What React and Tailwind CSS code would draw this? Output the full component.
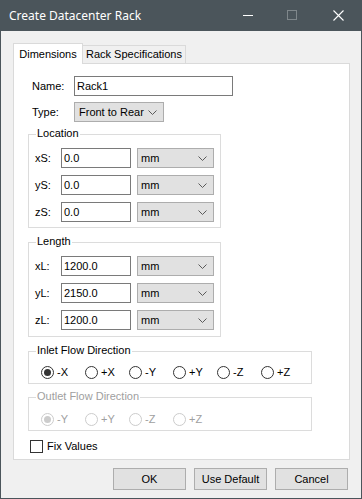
import React from "react";

const F = { fontFamily: '"Liberation Sans", Arial, sans-serif' };

function Chevron({ color = "#5a5a5a" }) {
  return (
    <svg width="9" height="5" viewBox="0 0 9 5" className="block">
      <path d="M0.5 0.5 L4.5 4.5 L8.5 0.5" fill="none" stroke={color} strokeWidth="1" />
    </svg>
  );
}

function Select({ value, w, pl = "pl-[3px]" }) {
  return (
    <div className={`h-[20px] ${w} bg-[#e1e1e1] border border-[#adadad] flex items-center justify-between ${pl} pr-[6px] text-[11px] text-black`}>
      <span>{value}</span>
      <Chevron />
    </div>
  );
}

function Input({ value, w }) {
  return (
    <div className={`h-[20px] ${w} bg-white border border-[#7a7a7a] flex items-center pl-[2px] text-[11px] text-black`}>
      {value}
    </div>
  );
}

function Row({ label, value }) {
  return (
    <div className="flex items-center h-[20px]">
      <span className="w-[26px] text-[11px] text-black">{label}</span>
      <Input value={value} w="w-[70px]" />
      <div className="w-[6px]" />
      <Select value="mm" w="w-[77px]" />
    </div>
  );
}

function Group({ title, className, children, disabled }) {
  return (
    <div className={`relative border border-[#dcdcdc] ${className}`}>
      <span
        className={`absolute -top-[8px] left-[7px] px-px bg-white text-[11px] leading-[13px] ${disabled ? "text-[#a0a0a0]" : "text-black"}`}
      >
        {title}
      </span>
      {children}
    </div>
  );
}

function Radio({ label, checked, disabled }) {
  const border = disabled ? "border-[#cccccc]" : "border-[#333333]";
  const dot = disabled ? "bg-[#cccccc]" : "bg-[#333333]";
  return (
    <div className="w-[44px] flex items-center">
      <div className={`w-[13px] h-[13px] rounded-full border ${border} bg-white flex items-center justify-center`}>
        {checked && <div className={`w-[7px] h-[7px] rounded-full ${dot}`} />}
      </div>
      <span className={`ml-[3px] text-[11px] ${disabled ? "text-[#a0a0a0]" : "text-black"}`}>{label}</span>
    </div>
  );
}

function Button({ children }) {
  return (
    <div className="w-[73px] h-[22px] bg-[#e1e1e1] border border-[#adadad] flex items-center justify-center text-[11px] text-black">
      {children}
    </div>
  );
}

export default function App() {
  return (
    <div className="w-[362px] h-[499px] bg-[#f0f0f0] border-x border-b border-[#4b555b] flex flex-col" style={F}>
      <div className="h-[31px] bg-[#4b555b] flex items-center relative shrink-0">
        <span className="ml-[8px] text-[12px] text-white" style={{ fontFamily: '"Noto Sans", "Open Sans", sans-serif' }}>
          Create Datacenter Rack
        </span>
        <div className="absolute left-[242px] top-[15px] w-[10px] h-px bg-white" />
        <div className="absolute left-[286px] top-[10px] w-[10px] h-[10px] border border-[#7f878b]" />
        <svg className="absolute left-[332px] top-[10px]" width="11" height="11" viewBox="0 0 11 11">
          <path d="M0.5 0.5 L10.5 10.5 M10.5 0.5 L0.5 10.5" stroke="#ffffff" strokeWidth="1.1" />
        </svg>
      </div>

      <div className="flex flex-col pl-[12px] pt-[12px]">
        <div className="flex items-end h-[20px] relative z-10">
          <div className="h-[21px] -mb-px w-[70px] bg-white border-t border-x border-[#dadada] flex items-center justify-center text-[11px] text-black">
            Dimensions
          </div>
          <div className="h-[18px] w-[103px] bg-[#f0f0f0] border-t border-r border-[#dadada] flex items-center justify-center text-[11px] text-black">
            Rack Specifications
          </div>
        </div>
        <div className="w-[337px] h-[397px] bg-white border border-[#dadada] flex flex-col">
          <div className="flex items-center mt-[12px] pl-[18px] h-[20px]">
            <span className="w-[42px] text-[11px] text-black">Name:</span>
            <Input value="Rack1" w="w-[159px]" />
          </div>
          <div className="flex items-center mt-[6px] pl-[18px] h-[20px]">
            <span className="w-[42px] text-[11px] text-black">Type:</span>
            <Select value="Front to Rear" w="w-[90px]" pl="pl-[4px]" />
          </div>

          <Group title="Location" className="ml-[14px] mt-[12px] w-[193px] h-[94px] pt-[13px] pl-[6px] flex flex-col gap-[7px]">
            <Row label="xS:" value="0.0" />
            <Row label="yS:" value="0.0" />
            <Row label="zS:" value="0.0" />
          </Group>

          <Group title="Length" className="ml-[14px] mt-[14px] w-[193px] h-[95px] pt-[13px] pl-[6px] flex flex-col gap-[7px]">
            <Row label="xL:" value="1200.0" />
            <Row label="yL:" value="2150.0" />
            <Row label="zL:" value="1200.0" />
          </Group>

          <Group title="Inlet Flow Direction" className="ml-[14px] mt-[14px] w-[284px] h-[33px] pt-[10px] pl-[12px] flex">
            <Radio label="-X" checked />
            <Radio label="+X" />
            <Radio label="-Y" />
            <Radio label="+Y" />
            <Radio label="-Z" />
            <Radio label="+Z" />
          </Group>

          <Group title="Outlet Flow Direction" disabled className="ml-[14px] mt-[13px] w-[284px] h-[34px] pt-[10px] pl-[12px] flex">
            <Radio label="-Y" checked disabled />
            <Radio label="+Y" disabled />
            <Radio label="-Z" disabled />
            <Radio label="+Z" disabled />
          </Group>

          <div className="flex items-center ml-[16px] mt-[7px]">
            <div className="w-[13px] h-[13px] border border-[#333333] bg-white" />
            <span className="ml-[4px] text-[11px] text-black">Fix Values</span>
          </div>
        </div>

        <div className="flex justify-end gap-[8px] mt-[8px] pr-[13px]">
          <Button>OK</Button>
          <Button>Use Default</Button>
          <Button>Cancel</Button>
        </div>
      </div>
    </div>
  );
}
